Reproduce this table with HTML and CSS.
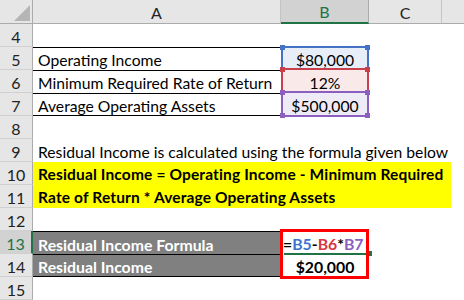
FILE: index.html
```html
<!DOCTYPE html>
<html>
<head>
<meta charset="utf-8">
<link rel="stylesheet" href="styles.css">
</head>
<body>
<div class="sheet">
  <div class="corner"><span class="tri"></span></div>
  <div class="colhead">A</div>
  <div class="colhead sel">B</div>
  <div class="colhead">C</div>
  <div class="colhead last"></div>

  <div class="rowhead">4</div><div class="cell"></div><div class="cell"></div><div class="cell"></div><div class="cell"></div>

  <div class="rowhead">5</div>
  <div class="cell txt bt">Operating Income</div>
  <div class="cell num ref blue">$80,000<span class="frame"><i class="sq tl"></i><i class="sq tr"></i><i class="sq bl"></i><i class="sq br"></i></span></div>
  <div class="cell"></div><div class="cell"></div>

  <div class="rowhead">6</div>
  <div class="cell txt bt">Minimum Required Rate of Return</div>
  <div class="cell num ref red">12%<span class="frame"><i class="sq tl"></i><i class="sq tr"></i><i class="sq bl"></i><i class="sq br"></i></span></div>
  <div class="cell"></div><div class="cell"></div>

  <div class="rowhead">7</div>
  <div class="cell txt bt bb">Average Operating Assets</div>
  <div class="cell num ref purple">$500,000<span class="frame"><i class="sq tl"></i><i class="sq tr"></i><i class="sq bl"></i><i class="sq br"></i></span></div>
  <div class="cell"></div><div class="cell"></div>

  <div class="rowhead">8</div><div class="cell"></div><div class="cell"></div><div class="cell"></div><div class="cell"></div>

  <div class="rowhead">9</div>
  <div class="cell txt over">Residual Income is calculated using the formula given below</div>
  <div class="cell"></div><div class="cell"></div><div class="cell"></div>

  <div class="rowhead r10">10</div>
  <div class="merged">Residual Income = Operating Income - Minimum Required Rate of Return * Average Operating Assets</div>
  <div class="rowhead r11">11</div>

  <div class="rowhead">12</div><div class="cell"></div><div class="cell"></div><div class="cell"></div><div class="cell"></div>

  <div class="rowhead active">13</div>
  <div class="cell txt dark bt">Residual Income Formula</div>
  <div class="cell formula">=<span class="c-blue">B5</span>-<span class="c-red">B6</span>*<span class="c-purple">B7</span><span class="redbox"></span><span class="selline"><i class="handle"></i></span></div>
  <div class="cell"></div><div class="cell"></div>

  <div class="rowhead">14</div>
  <div class="cell txt dark bt bb">Residual Income</div>
  <div class="cell num bold">$20,000</div>
  <div class="cell"></div><div class="cell"></div>

  <div class="rowhead">15</div><div class="cell"></div><div class="cell"></div><div class="cell"></div><div class="cell"></div>
</div>
</body>
</html>
```

FILE: styles.css
```css
* { box-sizing: border-box; }
html, body { margin: 0; padding: 0; background: #fff; }
body { font-family: Lato, "Open Sans", sans-serif; font-size: 15.7px; color: #000; }

.sheet {
  display: grid;
  grid-template-columns: 33px 248px 88px 73px 22px;
  grid-template-rows: 24px repeat(12, 23px);
  width: 464px;
  height: 300px;
  overflow: hidden;
}

.corner {
  background: #e6e6e6;
  border-right: 1px solid #ababab;
  border-bottom: 1px solid #ababab;
  position: relative;
}
.tri {
  position: absolute;
  right: 2px;
  bottom: 2px;
  width: 0;
  height: 0;
  border-left: 16px solid transparent;
  border-bottom: 16px solid #b5b5b5;
}

.colhead {
  background: #e6e6e6;
  border-right: 1px solid #c4c4c4;
  border-bottom: 1px solid #ababab;
  display: flex;
  align-items: center;
  justify-content: center;
  font-size: 16px;
  color: #222;
  padding-top: 1px;
}
.colhead.sel {
  background: #d2d2d2;
  color: #217346;
  border-right-color: #ababab;
  border-bottom: 2px solid #217346;
}
.colhead.last { border-right: none; }

.rowhead {
  grid-column: 1;
  background: #e6e6e6;
  border-right: 1px solid #ababab;
  border-bottom: 1px solid #d0d0d0;
  display: flex;
  align-items: center;
  justify-content: center;
  font-size: 16px;
  color: #222;
  padding-top: 2px;
}
.rowhead.r10 { grid-row: 8; }
.rowhead.r11 { grid-row: 9; }
.rowhead.active {
  background: #d2d2d2;
  color: #217346;
  border-right: 2px solid #217346;
}

.cell {
  position: relative;
  display: flex;
  align-items: center;
  padding-top: 2px;
  white-space: nowrap;
}
.txt { padding-left: 5px; }
.over { overflow: visible; z-index: 1; }
.bt { border-top: 1px solid #000; }
.bb { border-bottom: 1px solid #000; }
.num { justify-content: center; }
.bold { font-weight: bold; font-size: 15.8px; }

.dark {
  background: #808080;
  color: #fff;
  font-weight: bold;
  font-size: 15.8px;
}

.ref.blue { background: #e8eef8; }
.ref.red { background: #f9e9e9; }
.ref.purple { background: #efebf6; }

.frame {
  position: absolute;
  top: -1px;
  bottom: -1px;
  left: 0;
  right: 0;
  border: 2px solid currentColor;
  pointer-events: none;
}
.blue .frame { color: #4472c4; }
.red .frame { color: #c8404b; }
.purple .frame { color: #8a5fbf; }
.red .frame { top: -2px; }
.purple .frame { top: -2px; }
.sq {
  position: absolute;
  width: 5px;
  height: 5px;
  background: currentColor;
}
.sq.tl { left: -3px; top: -3px; }
.sq.tr { right: -3px; top: -3px; }
.sq.bl { left: -3px; bottom: -3px; }
.sq.br { right: -3px; bottom: -3px; }

.merged {
  grid-column: 2 / 6;
  grid-row: 8 / 10;
  margin-right: 13px;
  background: #ffff00;
  font-weight: bold;
  font-size: 15.5px;
  letter-spacing: 0.15px;
  padding: 1px 0 0 5px;
  line-height: 23px;
  white-space: normal;
}

.formula {
  font-weight: bold;
  font-size: 15.8px;
  padding-left: 2px;
}
.c-blue { color: #3b74d1; }
.c-red { color: #d7373f; }
.c-purple { color: #8a5fbf; }

.redbox {
  position: absolute;
  left: -1px;
  top: -2px;
  width: 89px;
  height: 50px;
  border: 3px solid #ff0000;
  z-index: 2;
}
.selline {
  position: absolute;
  left: 3px;
  right: 3px;
  bottom: -1px;
  height: 2px;
  background: #217346;
  z-index: 1;
}
.handle {
  position: absolute;
  right: -6px;
  top: -2px;
  width: 5px;
  height: 5px;
  background: #217346;
  z-index: 3;
}
```
